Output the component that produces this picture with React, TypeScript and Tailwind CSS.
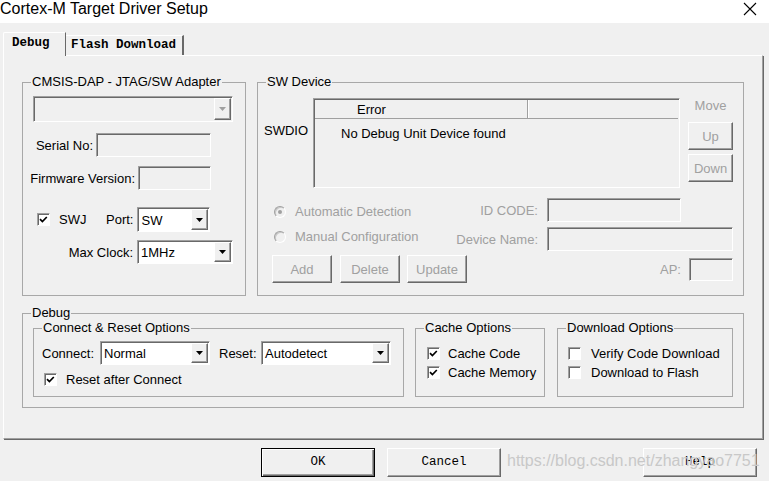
import React from "react";

const sunken =
  "border border-t-[#a0a0a0] border-l-[#a0a0a0] border-b-white border-r-white shadow-[inset_1px_1px_0_#696969]";
const raised =
  "border border-t-white border-l-white border-b-[#696969] border-r-[#696969] shadow-[inset_-1px_-1px_0_#a0a0a0]";
const group = "border border-[#a8a8a8]";

function Arrow({ disabled }: { disabled?: boolean }) {
  return (
    <svg width="7" height="4" viewBox="0 0 7 4">
      <path d="M0 0H7L3.5 4Z" fill={disabled ? "#a0a0a0" : "#000"} />
    </svg>
  );
}

function Combo({
  className,
  value,
  disabled,
}: {
  className: string;
  value?: string;
  disabled?: boolean;
}) {
  return (
    <div className={`flex ${sunken} ${disabled ? "bg-[#f0f0f0]" : "bg-white"} ${className}`}>
      <div className="flex-1 flex items-center pl-[3px] pt-[1px]">{value}</div>
      <div className={`w-[17px] my-[1px] mr-[1px] flex items-center justify-center bg-[#f0f0f0] ${raised}`}>
        <Arrow disabled={disabled} />
      </div>
    </div>
  );
}

function Check({ checked }: { checked?: boolean }) {
  return (
    <div className={`w-[13px] h-[13px] shrink-0 bg-white flex items-center justify-center ${sunken}`}>
      {checked && (
        <svg width="9" height="9" viewBox="0 0 9 9">
          <path d="M1 4.2L3.4 6.6L7.8 2" stroke="#000" strokeWidth="1.7" fill="none" />
        </svg>
      )}
    </div>
  );
}

function Radio({ checked }: { checked?: boolean }) {
  return (
    <div className="w-[12px] h-[12px] rounded-full bg-[#f0f0f0] border border-t-[#a0a0a0] border-l-[#a0a0a0] border-b-white border-r-white shadow-[inset_1px_1px_0_#c8c8c8] flex items-center justify-center shrink-0">
      {checked && <div className="w-[4px] h-[4px] rounded-full bg-[#a0a0a0]" />}
    </div>
  );
}

function Group({
  className,
  title,
  children,
}: {
  className: string;
  title: string;
  children?: React.ReactNode;
}) {
  return (
    <fieldset className={`${group} ${className}`}>
      <legend className="ml-[8px] px-[1px] leading-[14px]">{title}</legend>
      {children}
    </fieldset>
  );
}

export default function App() {
  return (
    <div className="w-[769px] h-[481px] bg-[#f0f0f0] overflow-hidden relative font-['Liberation_Sans',Arial,sans-serif] text-[13px] leading-[15px] text-black">
      {/* title bar */}
      <div className="h-[23px] bg-white flex items-start justify-between">
        <div className="text-[16px] leading-[18px]">Cortex-M Target Driver Setup</div>
        <svg className="mt-[2px] mr-[12px]" width="14" height="14" viewBox="0 0 14 14">
          <path d="M1 1L13 13M13 1L1 13" stroke="#000" strokeWidth="1.1" />
        </svg>
      </div>

      {/* tabs */}
      <div className="flex items-end h-[23px] mt-[9px] pl-[3px] font-['Liberation_Mono',monospace] text-[12.5px] font-bold">
        <div className="relative z-10 -mb-px h-[24px] w-[63px] bg-[#f0f0f0] border-t border-l border-r border-t-white border-l-white border-r-[#696969] rounded-tl-[2px] pl-[8px] pt-[3px]">
          Debug
        </div>
        <div className="h-[20px] w-[118px] border-t border-r-2 border-t-white border-r-[#696969] pl-[5px] pt-[2px]">
          Flash Download
        </div>
      </div>

      {/* tab panel */}
      <div className="ml-[3px] w-[760px] h-[384px] border border-t-white border-l-white border-r-[#a0a0a0] border-b-[#a0a0a0] shadow-[1px_1px_0_#696969] pl-[18px] pt-[19px]">
        <div className="flex gap-[11px]">
          {/* CMSIS-DAP */}
          <Group className="w-[224px] h-[221px]" title="CMSIS-DAP - JTAG/SW Adapter">
            <Combo className="ml-[10px] mt-[7px] w-[200px] h-[26px]" disabled />
            <div className="flex items-center mt-[11px] h-[24px]">
              <div className="w-[70px] text-right">Serial No:</div>
              <div className={`ml-[3px] w-[115px] h-[24px] bg-[#f0f0f0] ${sunken}`} />
            </div>
            <div className="flex items-center mt-[9px] h-[24px]">
              <div className="w-[112px] text-right">Firmware Version:</div>
              <div className={`ml-[3px] w-[73px] h-[24px] bg-[#f0f0f0] ${sunken}`} />
            </div>
            <div className="flex items-center mt-[17px] h-[25px]">
              <div className="ml-[14px]">
                <Check checked />
              </div>
              <div className="ml-[9px] w-[47px]">SWJ</div>
              <div>Port:</div>
              <Combo className="ml-[4px] w-[73px] h-[25px]" value="SW" />
            </div>
            <div className="flex items-center mt-[8px] h-[24px]">
              <div className="w-[110px] text-right">Max Clock:</div>
              <Combo className="ml-[4px] w-[96px] h-[24px]" value="1MHz" />
            </div>
          </Group>

          {/* SW Device */}
          <Group className="w-[487px] h-[221px]" title="SW Device">
            <div className="flex items-start mt-[9px]">
              <div className="w-[55px] pl-[6px] pt-[25px]">SWDIO</div>
              <div className={`w-[367px] h-[90px] bg-[#f0f0f0] ${sunken} p-[1px]`}>
                <div className="flex h-[19px] border-b border-b-[#a0a0a0]">
                  <div className="w-[213px] border-r border-r-[#a0a0a0] shadow-[1px_0_0_white] pl-[42px] pt-[2px]">
                    Error
                  </div>
                  <div className="flex-1" />
                </div>
                <div className="pl-[26px] pt-[7px]">No Debug Unit Device found</div>
              </div>
              <div className="ml-[8px] w-[45px] flex flex-col">
                <div className="text-center text-[#a0a0a0]">Move</div>
                <div className={`mt-[9px] h-[28px] flex items-center justify-center text-[#a0a0a0] ${raised}`}>Up</div>
                <div className={`mt-[4px] h-[28px] flex items-center justify-center text-[#a0a0a0] ${raised}`}>Down</div>
              </div>
            </div>
            <div className="flex items-center mt-[10px] h-[24px] text-[#a0a0a0]">
              <div className="w-[186px] pl-[16px] flex items-center pt-[3px]">
                <Radio checked />
                <span className="ml-[9px]">Automatic Detection</span>
              </div>
              <div className="w-[94px] text-right">ID CODE:</div>
              <div className={`ml-[9px] w-[134px] h-[24px] bg-[#f0f0f0] ${sunken}`} />
            </div>
            <div className="flex items-center mt-[5px] h-[24px] text-[#a0a0a0]">
              <div className="w-[186px] pl-[16px] flex items-center pb-[5px]">
                <Radio />
                <span className="ml-[9px]">Manual Configuration</span>
              </div>
              <div className="w-[94px] text-right">Device Name:</div>
              <div className={`ml-[9px] w-[186px] h-[24px] bg-[#f0f0f0] ${sunken}`} />
            </div>
            <div className="flex items-center mt-[4px] text-[#a0a0a0]">
              <div className={`ml-[14px] w-[60px] h-[28px] flex items-center justify-center ${raised}`}>Add</div>
              <div className={`ml-[8px] w-[60px] h-[28px] flex items-center justify-center ${raised}`}>Delete</div>
              <div className={`ml-[7px] w-[60px] h-[28px] flex items-center justify-center ${raised}`}>Update</div>
              <div className="ml-auto">AP:</div>
              <div className={`ml-[8px] mr-[10px] w-[44px] h-[23px] bg-[#f0f0f0] ${sunken}`} />
            </div>
          </Group>
        </div>

        {/* Debug */}
        <Group className="mt-[10px] w-[722px] h-[102px]" title="Debug">
          <div className="flex pl-[10px] mt-[1px]">
            <Group className="w-[371px] h-[76px]" title="Connect & Reset Options">
              <div className="flex items-center mt-[6px] h-[24px]">
                <div className="ml-[8px] w-[58px]">Connect:</div>
                <Combo className="w-[110px] h-[24px]" value="Normal" />
                <div className="ml-[9px] w-[42px]">Reset:</div>
                <Combo className="w-[130px] h-[24px]" value="Autodetect" />
              </div>
              <div className="flex items-center mt-[7px] h-[15px]">
                <div className="ml-[10px]">
                  <Check checked />
                </div>
                <span className="ml-[9px]">Reset after Connect</span>
              </div>
            </Group>
            <Group className="ml-[11px] w-[130px] h-[76px]" title="Cache Options">
              <div className="flex items-center mt-[11px] h-[15px]">
                <div className="ml-[11px]">
                  <Check checked />
                </div>
                <span className="ml-[8px]">Cache Code</span>
              </div>
              <div className="flex items-center mt-[4px] h-[15px]">
                <div className="ml-[11px]">
                  <Check checked />
                </div>
                <span className="ml-[8px]">Cache Memory</span>
              </div>
            </Group>
            <Group className="ml-[12px] w-[176px] h-[76px]" title="Download Options">
              <div className="flex items-center mt-[11px] h-[15px]">
                <div className="ml-[10px]">
                  <Check />
                </div>
                <span className="ml-[10px]">Verify Code Download</span>
              </div>
              <div className="flex items-center mt-[4px] h-[15px]">
                <div className="ml-[10px]">
                  <Check />
                </div>
                <span className="ml-[10px]">Download to Flash</span>
              </div>
            </Group>
          </div>
        </Group>
      </div>

      {/* dialog buttons */}
      <div className="flex mt-[9px] font-['Liberation_Mono',monospace] text-[12.5px]">
        <div className="ml-[261px] w-[114px] h-[29px] flex items-center justify-center border border-black shadow-[inset_1px_1px_0_white,inset_-1px_-1px_0_#696969,inset_-2px_-2px_0_#a0a0a0]">
          OK
        </div>
        <div className={`ml-[12px] w-[114px] h-[29px] flex items-center justify-center ${raised}`}>Cancel</div>
        <div className={`ml-[142px] w-[114px] h-[29px] flex items-center justify-center ${raised}`}>Help</div>
      </div>

      {/* watermark */}
      <div className="absolute left-[507px] top-[453px] text-[16px] text-[#c8c8c8] pointer-events-none whitespace-nowrap">
        https://blog.csdn.net/zhangyao7751
      </div>
    </div>
  );
}
